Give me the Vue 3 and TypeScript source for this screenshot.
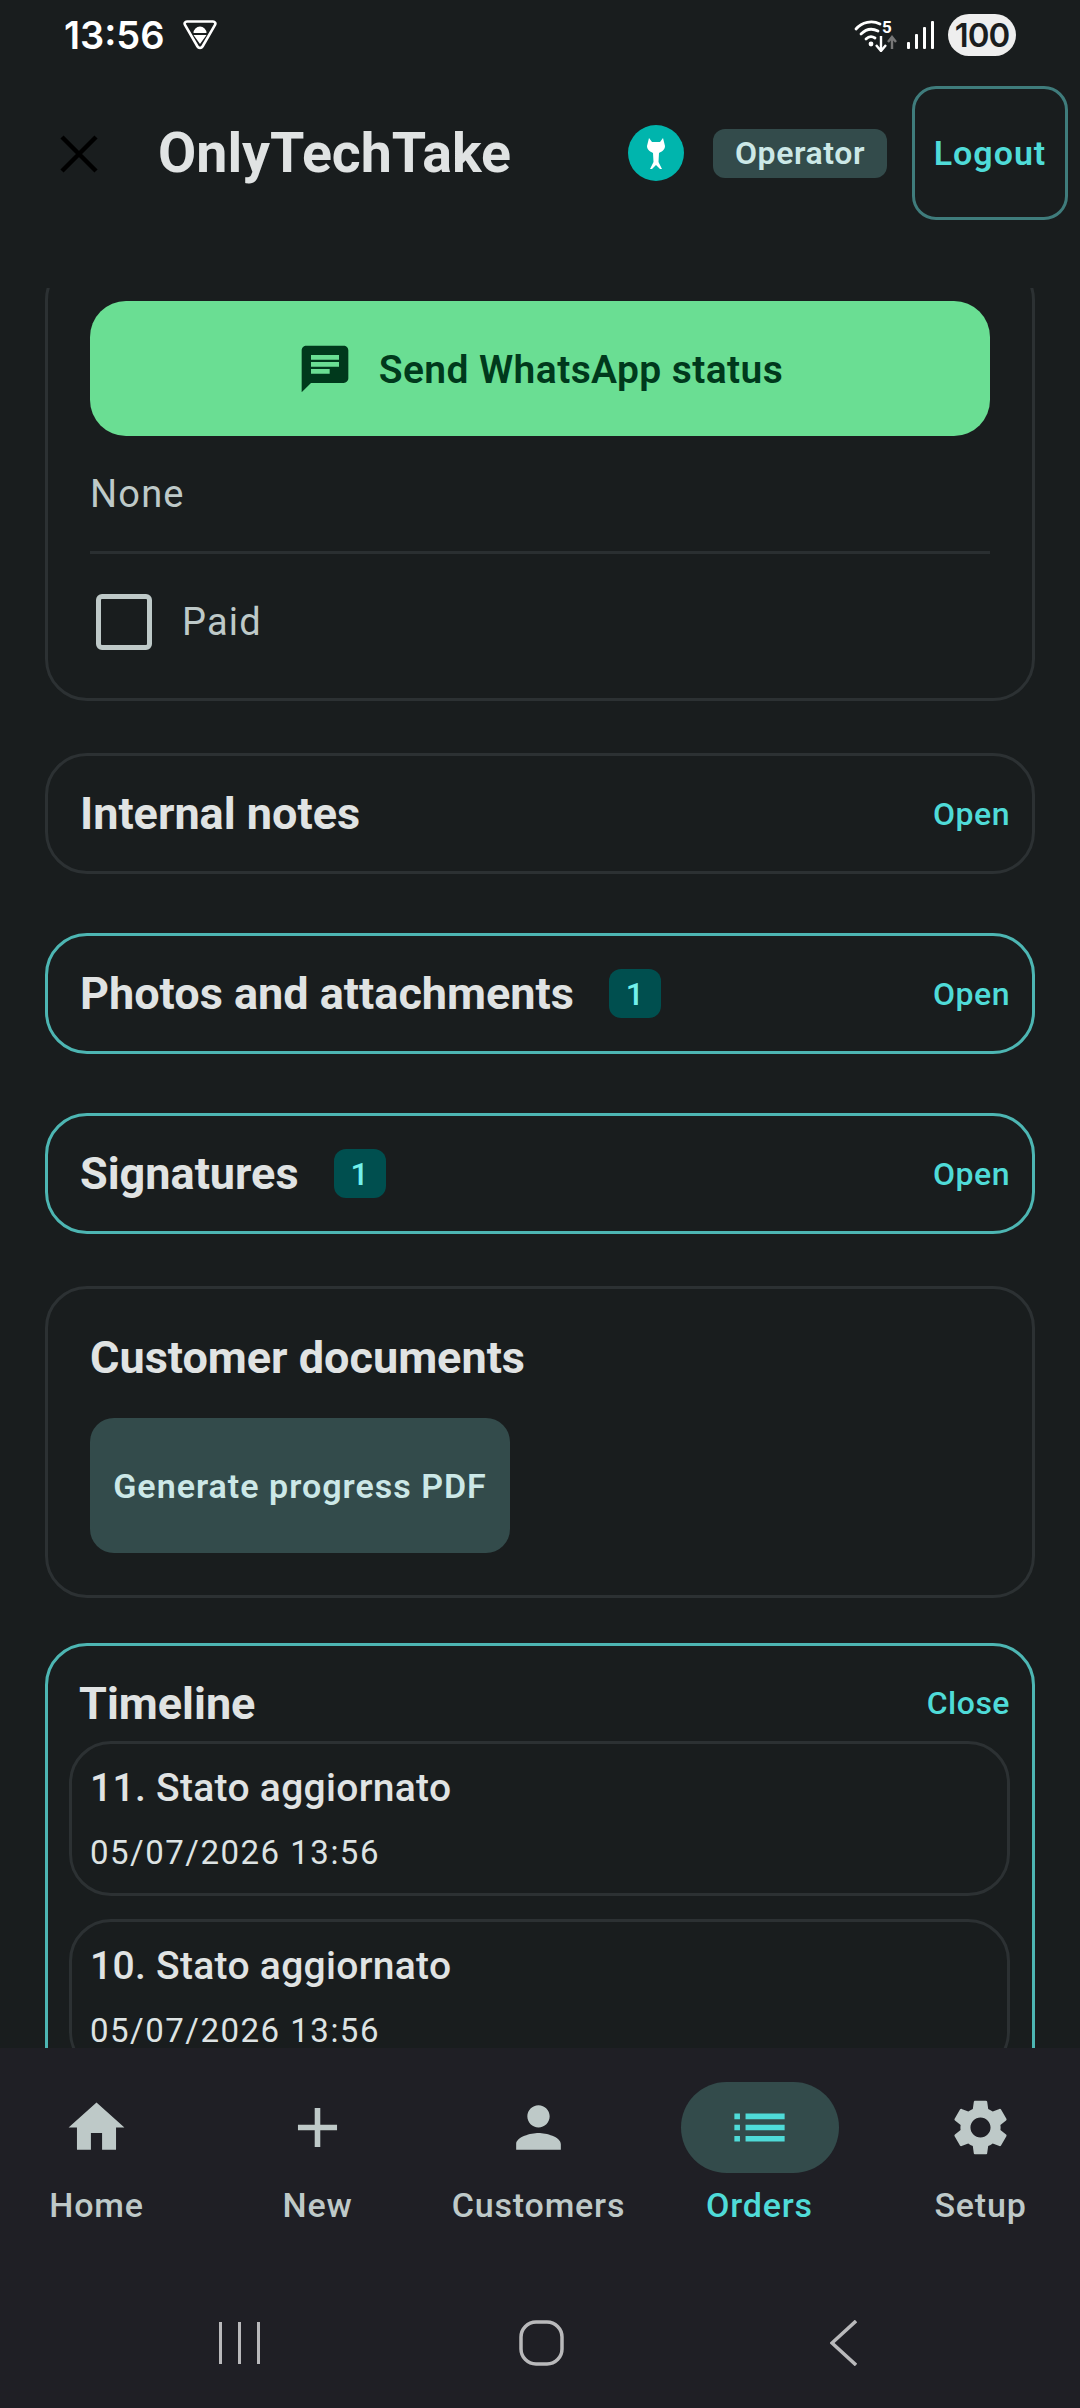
<script setup lang="ts">
interface NavItem {
  label: string
  active?: boolean
  icon: string
}

const navItems: NavItem[] = [
  { label: 'Home', icon: 'M10 20v-6h4v6h5v-8h3L12 3 2 12h3v8z' },
  { label: 'New', icon: 'M19 13h-6v6h-2v-6H5v-2h6V5h2v6h6v2z' },
  { label: 'Customers', icon: 'M12 12c2.21 0 4-1.79 4-4s-1.79-4-4-4-4 1.79-4 4 1.79 4 4 4zm0 2c-2.67 0-8 1.34-8 4v2h16v-2c0-2.66-5.33-4-8-4z' },
  { label: 'Orders', active: true, icon: 'M3 13h2v-2H3v2zm0 4h2v-2H3v2zm0-8h2V7H3v2zm4 4h14v-2H7v2zm0 4h14v-2H7v2zM7 7v2h14V7H7z' },
  { label: 'Setup', icon: 'M19.14 12.94c.04-.3.06-.61.06-.94 0-.32-.02-.64-.07-.94l2.03-1.58a.49.49 0 0 0 .12-.61l-1.92-3.32a.488.488 0 0 0-.59-.22l-2.39.96c-.5-.38-1.03-.7-1.62-.94l-.36-2.54a.484.484 0 0 0-.48-.41h-3.84c-.24 0-.43.17-.47.41l-.36 2.54c-.59.24-1.13.57-1.62.94l-2.39-.96c-.22-.08-.47 0-.59.22L2.74 8.87c-.12.21-.08.47.12.61l2.03 1.58c-.05.3-.09.63-.09.94s.02.64.07.94l-2.03 1.58a.49.49 0 0 0-.12.61l1.92 3.32c.12.22.37.29.59.22l2.39-.96c.5.38 1.03.7 1.62.94l.36 2.54c.05.24.24.41.48.41h3.84c.24 0 .44-.17.47-.41l.36-2.54c.59-.24 1.13-.56 1.62-.94l2.39.96c.22.08.47 0 .59-.22l1.92-3.32c.12-.22.07-.47-.12-.61l-2.01-1.58zM12 15.6c-1.98 0-3.6-1.62-3.6-3.6s1.62-3.6 3.6-3.6 3.6 1.62 3.6 3.6-1.62 3.6-3.6 3.6z' },
]

const sections = [
  { title: 'Internal notes', action: 'Open', badge: 0, active: false },
  { title: 'Photos and attachments', action: 'Open', badge: 1, active: true },
  { title: 'Signatures', action: 'Open', badge: 1, active: true },
]

const events = [
  { title: '11. Stato aggiornato', date: '05/07/2026 13:56' },
  { title: '10. Stato aggiornato', date: '05/07/2026 13:56' },
]
</script>

<template>
  <div class="phone">
    <div class="status-bar">
      <div class="status-left">
        <span class="clock">13:56</span>
        <svg class="shield" width="34" height="32" viewBox="0 0 34 32">
          <path d="M4 2.500h26c2 0 3 1.700 2 3.300L19.500 27.500c-1.100 1.900-3.900 1.900-5 0L2 5.800C1 4.200 2 2.500 4 2.500z" fill="none" stroke="#fff" stroke-width="2.600" />
          <path d="M10.500 14a6.500 6.500 0 0 1 13 0zM10.500 16h13L17 25z" fill="#fff" />
        </svg>
      </div>
      <div class="status-right">
        <svg width="44" height="34" viewBox="0 0 44 34" class="wifi">
          <g fill="none" stroke="#fff" stroke-width="2.800" stroke-linecap="round">
            <path d="M2 11C8 4 18 2 26 6" />
            <path d="M7 16c5-5 11-6 17-3" />
            <path d="M12 21c3-3 6-3 9-1" />
          </g>
          <circle cx="17" cy="26" r="2.400" fill="#fff" />
          <path d="M27 18v14M22 27l5 6 5-6" fill="none" stroke="#fff" stroke-width="2.400" />
          <path d="M38 31V20M34 24l4-5 4 5" fill="none" stroke="#777" stroke-width="2.400" />
          <text x="28" y="15" class="wifi-five">5</text>
        </svg>
        <svg width="27" height="28" viewBox="0 0 27 28" class="signal">
          <rect x="0" y="21" width="3" height="7" rx="1" fill="#fff" />
          <rect x="8" y="13" width="3" height="15" rx="1" fill="#fff" />
          <rect x="16" y="6" width="3" height="22" rx="1" fill="#fff" />
          <rect x="24" y="0" width="3" height="28" rx="1" fill="#fff" />
        </svg>
        <span class="battery">100</span>
      </div>
    </div>

    <header class="top-bar">
      <svg class="close-icon" width="38" height="38" viewBox="0 0 38 38">
        <path d="M2 2l34 34M36 2L2 36" stroke="#000" stroke-width="4.500" fill="none" />
      </svg>
      <h1 class="app-title">OnlyTechTake</h1>
      <div class="top-actions">
        <span class="avatar">
          <svg width="18" height="32" viewBox="0 0 18 32">
            <path d="M2 1l3 4h8l3-4 2 8c0 4-4 6-6 7l-.5 9 3.500 7h-2l-4-4-4 4H3l3.500-7L6 16C4 15 0 13 0 9z" fill="#fff" />
          </svg>
        </span>
        <span class="role-chip">Operator</span>
        <button class="logout">Logout</button>
      </div>
    </header>

    <main class="content">
      <section class="card status-card">
        <button class="send-btn">
          <svg width="56" height="56" viewBox="0 0 24 24">
            <path d="M20 2H4c-1.100 0-2 .9-2 2v18l4-4h14c1.100 0 2-.9 2-2V4c0-1.100-.9-2-2-2zM6 9h12v2H6V9zm8 5H6v-2h8v2zm4-6H6V6h12v2z" fill="#00391c" />
          </svg>
          <span class="send-label">Send WhatsApp status</span>
        </button>
        <p class="none-text">None</p>
        <div class="divider" />
        <label class="paid-row">
          <i class="checkbox" />
          <span>Paid</span>
        </label>
      </section>

      <section
        v-for="section in sections"
        :key="section.title"
        class="row-card"
        :class="{ 'row-active': section.active }"
      >
        <span class="row-title">{{ section.title }}</span>
        <span v-if="section.badge" class="badge">{{ section.badge }}</span>
        <span class="row-action">{{ section.action }}</span>
      </section>

      <section class="card docs-card">
        <h2 class="docs-title">Customer documents</h2>
        <button class="pdf-btn">Generate progress PDF</button>
      </section>

      <section class="timeline">
        <div class="timeline-head">
          <span class="row-title">Timeline</span>
          <span class="row-action">Close</span>
        </div>
        <article v-for="ev in events" :key="ev.title" class="event">
          <div class="event-title">{{ ev.title }}</div>
          <div class="event-date">{{ ev.date }}</div>
        </article>
      </section>
    </main>

    <nav class="bottom-nav">
      <div v-for="item in navItems" :key="item.label" class="nav-item" :class="{ active: item.active }">
        <span class="nav-pill">
          <svg width="67" height="67" viewBox="0 0 24 24"><path :d="item.icon" fill="currentColor" /></svg>
        </span>
        <span class="nav-label">{{ item.label }}</span>
      </div>
    </nav>

    <div class="system-nav">
      <svg width="41" height="42" viewBox="0 0 41 42">
        <path d="M1.500 0v42M20.500 0v42M39.500 0v42" stroke="#b9b9bb" stroke-width="3" fill="none" />
      </svg>
      <svg width="45" height="46" viewBox="0 0 45 46">
        <rect x="2" y="2" width="41" height="42" rx="15" stroke="#b9b9bb" stroke-width="3.500" fill="none" />
      </svg>
      <svg width="27" height="46" viewBox="0 0 27 46">
        <path d="M26 1L2 23l24 22" stroke="#b9b9bb" stroke-width="3.500" fill="none" />
      </svg>
    </div>
  </div>
</template>

<style scoped>
.phone {
  width: 1080px;
  height: 2408px;
  display: flex;
  flex-direction: column;
  overflow: hidden;
  background: #191d1e;
  font-family: Roboto, "Noto Sans", sans-serif;
  color: #e0e3e3;
}

.status-bar {
  height: 70px;
  flex: none;
  box-sizing: border-box;
  display: flex;
  align-items: center;
  justify-content: space-between;
  padding: 0 64px;
}

.status-left,
.status-right {
  display: flex;
  align-items: center;
}

.clock {
  font-family: Inter, Roboto, sans-serif;
  font-size: 38px;
  font-weight: 600;
  color: #fff;
}

.shield {
  margin-left: 18px;
}

.wifi-five {
  font-family: Roboto, sans-serif;
  font-size: 17px;
  font-weight: 700;
  fill: #fff;
}

.signal {
  margin: 0 14px 0 9px;
}

.battery {
  width: 68px;
  height: 42px;
  border-radius: 21px;
  display: flex;
  align-items: center;
  justify-content: center;
  background: #eeeeee;
  color: #1a1d1e;
  font-family: Inter, Roboto, sans-serif;
  font-size: 33px;
  font-weight: 600;
  letter-spacing: -1px;
}

.top-bar {
  height: 218px;
  flex: none;
  box-sizing: border-box;
  display: flex;
  align-items: flex-start;
  padding: 16px 12px 0 60px;
}

.close-icon {
  margin-top: 49px;
}

.app-title {
  margin: 36px 0 0 60px;
  font-size: 55.5px;
  line-height: 64px;
  font-weight: 700;
  color: #e0e3e3;
}

.top-actions {
  margin-left: auto;
  display: flex;
  align-items: center;
  height: 134px;
}

.avatar {
  width: 56px;
  height: 56px;
  border-radius: 50%;
  background: #00b5ad;
  display: flex;
  align-items: center;
  justify-content: center;
}

.role-chip {
  margin-left: 29px;
  width: 174px;
  height: 49px;
  border-radius: 12px;
  display: flex;
  align-items: center;
  justify-content: center;
  background: #334b4b;
  color: #cce8e7;
  font-size: 32px;
  font-weight: 600;
  letter-spacing: 0.6px;
}

.logout {
  margin-left: 25px;
  width: 156px;
  height: 134px;
  border: 3px solid #3f7c7c;
  border-radius: 24px;
  background: transparent;
  color: #4fdbd8;
  font-family: inherit;
  font-size: 34px;
  font-weight: 600;
  letter-spacing: 1px;
  padding: 0;
}

.content {
  flex: 1;
  min-height: 0;
  overflow: hidden;
  padding: 0 45px;
}

.card {
  border: 3px solid #2c3133;
  border-radius: 42px;
}

.status-card {
  margin-top: -30px;
  height: 443px;
  box-sizing: border-box;
  padding: 40px 42px 0;
}

.send-btn {
  width: 100%;
  height: 135px;
  border: 0;
  border-radius: 36px;
  background: #6ade93;
  color: #00391c;
  font-family: inherit;
  font-size: 39px;
  font-weight: 600;
  letter-spacing: 0.4px;
  display: flex;
  align-items: center;
  justify-content: center;
  gap: 26px;
  padding: 0;
}

.send-label {
  padding-top: 2px;
}

.none-text {
  margin: 35px 0 0;
  height: 47px;
  font-size: 38px;
  line-height: 47px;
  letter-spacing: 1.2px;
  color: #bec9c8;
}

.divider {
  height: 3px;
  margin-top: 33px;
  background: #2a2f31;
}

.paid-row {
  display: flex;
  align-items: center;
  margin: 40px 0 0 6px;
  font-size: 38px;
  letter-spacing: 1.2px;
  color: #bec9c8;
}

.checkbox {
  width: 56px;
  height: 56px;
  box-sizing: border-box;
  border: 5px solid #bec9c8;
  border-radius: 6px;
  margin-right: 30px;
}

.row-card {
  height: 121px;
  box-sizing: border-box;
  margin-top: 52px;
  padding: 0 22px 0 32px;
  display: flex;
  align-items: center;
  border: 3px solid #2c3133;
  border-radius: 42px;
}

.row-active {
  border-color: #4db6b3;
  margin-top: 59px;
}

.row-title {
  font-size: 45px;
  font-weight: 700;
  color: #e0e3e3;
}

.badge {
  margin-left: 35px;
  width: 52px;
  height: 49px;
  border-radius: 12px;
  background: #004f4f;
  color: #72f0ec;
  display: flex;
  align-items: center;
  justify-content: center;
  font-size: 32px;
  font-weight: 500;
}

.row-action {
  margin-left: auto;
  color: #4fdbd8;
  font-size: 32px;
  font-weight: 500;
  letter-spacing: 0.5px;
}

.docs-card {
  height: 312px;
  box-sizing: border-box;
  margin-top: 52px;
  padding: 42px 42px 0;
}

.docs-title {
  margin: 0;
  font-size: 45px;
  line-height: 53px;
  font-weight: 700;
  color: #e0e3e3;
}

.pdf-btn {
  display: block;
  margin-top: 34px;
  width: 420px;
  height: 135px;
  border: 0;
  border-radius: 24px;
  background: #334b4b;
  color: #cce8e7;
  font-family: inherit;
  font-size: 34px;
  font-weight: 600;
  letter-spacing: 1px;
  padding: 0;
}

.timeline {
  margin-top: 45px;
  height: 480px;
  box-sizing: border-box;
  border: 3px solid #4db6b3;
  border-radius: 42px;
  padding: 29px 22px 0 21px;
}

.timeline-head {
  display: flex;
  align-items: center;
  justify-content: space-between;
  height: 56px;
  padding-left: 10px;
  margin-bottom: 10px;
}

.event {
  height: 155px;
  box-sizing: border-box;
  border: 3px solid #2c3133;
  border-radius: 42px;
  padding: 20px 18px 0;
  margin-bottom: 23px;
}

.event-title {
  font-size: 39px;
  line-height: 48px;
  font-weight: 500;
  letter-spacing: 0.3px;
  color: #e0e3e3;
}

.event-date {
  margin-top: 24px;
  font-size: 33px;
  line-height: 34px;
  letter-spacing: 1.5px;
  color: #dde3e3;
}

.bottom-nav {
  height: 230px;
  flex: none;
  display: grid;
  grid-template-columns: repeat(5, 221px);
  justify-content: center;
  background: #1f1f25;
  padding: 34px 3px 0 0;
  box-sizing: border-box;
}

.nav-item {
  display: flex;
  flex-direction: column;
  align-items: center;
  color: #bec9c8;
}

.nav-pill {
  width: 158px;
  height: 91px;
  border-radius: 46px;
  display: flex;
  align-items: center;
  justify-content: center;
}

.nav-item.active {
  color: #4fdbd8;
}

.nav-item.active .nav-pill {
  background: #334b4b;
}

.nav-label {
  margin-top: 12px;
  font-size: 34px;
  line-height: 40px;
  font-weight: 500;
  letter-spacing: 0.8px;
}

.system-nav {
  height: 130px;
  flex: none;
  background: #1f1f25;
  display: grid;
  grid-template-columns: repeat(3, 302px);
  justify-content: center;
  place-items: center;
  padding-left: 2px;
  box-sizing: border-box;
}
</style>

<style>
html,
body {
  background: #191d1e;
}
</style>
